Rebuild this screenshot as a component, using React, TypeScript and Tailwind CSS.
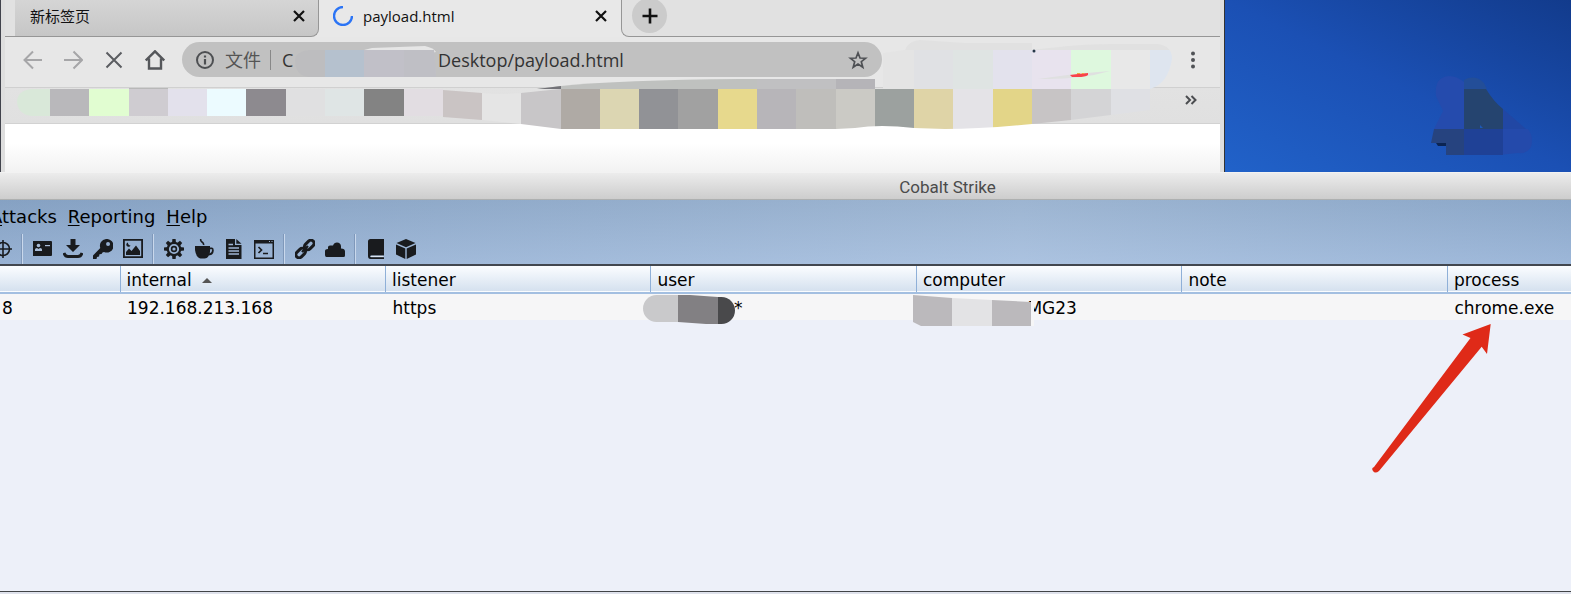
import type { ReactNode } from "react";

function Mosaic() {
  const cells: [number, number, string][] = [
    [50, 89, "#b9b8bb"], [89, 129, "#e1fdd1"], [129, 168, "#cfccd1"], [168, 207, "#e3e1ec"],
    [207, 246, "#ecfbff"], [246, 286, "#8d8a8f"], [286, 325, "#e0e0e1"], [325, 364, "#dfe5e5"],
    [364, 404, "#838383"], [404, 443, "#e2dde2"],
  ];
  const wide: [number, number, string][] = [
    [443, 482, "#cac4c4"], [482, 521, "#e5e5e5"], [521, 561, "#c8c6c8"], [561, 600, "#afaaa5"],
    [600, 639, "#dcd6b2"], [639, 678, "#919296"], [678, 718, "#a1a1a1"], [718, 757, "#e7d98d"],
    [757, 796, "#b7b5b9"], [796, 836, "#bfbebb"], [836, 875, "#cbcac5"], [875, 914, "#9ca19f"],
    [914, 953, "#dfd4a7"], [953, 993, "#e4e3e7"], [993, 1032, "#e3d588"], [1032, 1071, "#c7c4c5"],
    [1071, 1111, "#d4d4d6"], [1111, 1150, "#dfe0e4"],
  ];
  const upper: [number, number, string][] = [
    [883, 914, "#e4e4e4"], [914, 953, "#e0e1e4"], [953, 993, "#dfe4e3"], [993, 1032, "#e3e2ed"],
    [1032, 1071, "#e8e3ee"], [1071, 1111, "#def8de"], [1111, 1150, "#e8e8e8"], [1150, 1175, "#dee5ef"],
  ];
  return (
    <svg className="pointer-events-none absolute top-0 left-0" width="1220" height="135" aria-hidden="true">
      <defs>
        <clipPath id="lower">
          <path d="M443 90 L482 93 Q500 95 521 93 L560 89 H1150 V110 L1111 115 L1071 120 L1032 124 Q980 129 945 129 L914 128 Q880 124 855 128 L836 129 H561 L521 124 L482 120 L443 117Z" />
        </clipPath>
        <clipPath id="upper">
          <path d="M883 53 L905 50 Q908 41 920 40 L965 43 H1032 V50 Q1080 44 1110 44 H1158 Q1172 46 1172 59 Q1168 84 1150 89 H883Z" />
        </clipPath>
      </defs>
      <path d="M50 89 H31 Q17 91 17 102 Q18 114 31 116 H50Z" fill="#d9e8d9" />
      {cells.map(([a, b, c]) => <rect key={a} x={a} y={89} width={b - a} height={27} fill={c} />)}
      <rect x="129" y="88" width="39" height="1" fill="#b8b8b8" />
      <path d="M537 89 L561 86 Q620 80 740 79 H875 V89Z" fill="#bfc1bf" />
      <path d="M757 79 H836 V89 H757Z" fill="#c0c0c2" />
      <rect x="836" y="79" width="39" height="10" fill="#b5b4b8" />
      <path d="M537 89 L561 86 V89Z" fill="#727277" />
      <g clipPath="url(#lower)">
        {wide.map(([a, b, c]) => <rect key={a} x={a} y={89} width={b - a} height={41} fill={c} />)}
      </g>
      <g clipPath="url(#upper)">
        <rect x="883" y="40" width="292" height="10" fill="#e1e1e1" />
        {upper.map(([a, b, c]) => <rect key={a} x={a} y={50} width={b - a} height={39} fill={c} />)}
      </g>
      <path d="M1038 79 L1075 74 L1110 71 Q1080 80 1038 79Z" fill="#dfe0e0" />
      <path d="M1070 75 L1078 74 L1088 73 V75 Q1085 77 1078 77 L1072 77Z" fill="#f8434a" />
      <path d="M1077 73.500h3M1082 73.500h2" stroke="#efa640" />
      <circle cx="1034" cy="51" r="1.500" fill="#263748" />
      <path d="M325 50 H310 Q296 51 295 60 Q295 76 310 77 H325Z" fill="#bdbdbf" />
      <rect x="325" y="50" width="39" height="27" fill="#b5c1ce" />
      <path d="M364 50 L372 48 L425 46 Q434 48 436 52 L404 60Z" fill="#e6e6e6" />
      <path d="M364 50 H434 L436 77 H364Z" fill="#c1c0c8" />
      <path d="M404 50 H434 L436 77 H404Z" fill="#bfbfc5" />
    </svg>
  );
}

function CloseMark() {
  return (
    <svg width="12" height="12" viewBox="0 0 12 12" stroke="#111" strokeWidth="2.200">
      <path d="M1 1 11 11M11 1 1 11" />
    </svg>
  );
}

function Browser() {
  return (
    <section className="relative w-[78%] border-r border-[#333] bg-[#dedede] pr-1 pl-[5px]">
      <div className="absolute top-0 left-0 h-full w-px bg-[#41434c]" />
      <div className="flex h-[37px] bg-[#e1e1e1]">
        <div className="relative flex w-[314px] bg-[#e8e8e8]">
          <div className="w-2.5 border-b border-[#969696] bg-[#e1e1e1]" />
          <div className="flex flex-1 items-center justify-between rounded-br-lg border-r border-b border-[#969696] bg-linear-to-b from-[#d5d5d5] to-[#c6c6c6] pr-[13px] pb-1 pl-[15px] font-['Open_Sans','Noto_Sans_CJK_SC',sans-serif] text-[15px] leading-5 text-[#111]">
            <a href="#newtab">新标签页</a>
            <button aria-label="关闭新标签页"><CloseMark /></button>
          </div>
        </div>
        <div className="flex w-[302px] items-center bg-[#e8e8e8] pr-3.5 pb-[5px] pl-3.5 font-['Open_Sans',sans-serif] text-[15px] leading-5 text-[#111]">
          <svg width="20" height="20" viewBox="0 0 20 20" fill="none" stroke="#2b74f5" strokeWidth="2.400">
            <path d="M10 1 A9 9 0 1 0 19 10" />
          </svg>
          <a href="#payload" className="ml-2.5 flex-1">payload.html</a>
          <button aria-label="关闭 payload.html"><CloseMark /></button>
        </div>
        <div className="flex flex-1 bg-[#e8e8e8]">
          <div className="flex flex-1 rounded-bl-lg border-b border-l border-[#969696] bg-[#e1e1e1] pl-2.5">
            <button aria-label="新建标签页" className="-mt-0.5 flex size-[35px] items-center justify-center rounded-full bg-[#cbcbcb]">
              <svg width="16" height="16" viewBox="0 0 16 16" stroke="#111" strokeWidth="2.600"><path d="M8 0.500V15.500M0.500 8H15.500" /></svg>
            </button>
          </div>
        </div>
      </div>
      <div className="flex h-[51px] items-center border-b border-[#d0d0d0] bg-[#e7e7e7] pr-[22px] pb-[5px] pl-[17px] font-['Open_Sans','Noto_Sans_CJK_SC',sans-serif] text-lg leading-6 text-[#333]">
        <nav className="mr-[17px] flex gap-[21px]">
          <button aria-label="后退">
            <svg width="20" height="20" viewBox="0 0 20 20" fill="none" stroke="#a6a6a8" strokeWidth="2"><path d="M20 10H3M11 1.500 2.500 10 11 18.500" /></svg>
          </button>
          <button aria-label="前进">
            <svg width="20" height="20" viewBox="0 0 20 20" fill="none" stroke="#a6a6a8" strokeWidth="2"><path d="M1 10H18M10.500 1.500 19 10 10.500 18.500" /></svg>
          </button>
          <button aria-label="停止">
            <svg width="20" height="20" viewBox="0 0 20 20" fill="none" stroke="#5b5d61" strokeWidth="2"><path d="M2.500 2.500 17.500 17.500M17.500 2.500 2.500 17.500" /></svg>
          </button>
          <button aria-label="主页">
            <svg width="20" height="20" viewBox="0 0 20 20" fill="none" stroke="#55575b" strokeWidth="2.400"><path d="M0.800 10.500 10 1.300 19.200 10.500M4 8.500V18.500H16V8.500" /></svg>
          </button>
        </nav>
        <div className="flex h-[35px] flex-1 items-center rounded-full bg-[#c1c1c1] pr-3.5 pl-3.5">
          <svg width="18" height="18" viewBox="0 0 18 18" fill="none" stroke="#4d4f52" strokeWidth="2"><circle cx="9" cy="9" r="8" /><path d="M9 8V13.500M9 4.500V6.500" strokeWidth="2.200" /></svg>
          <span className="ml-[11px] text-[#555]">文件</span>
          <span className="ml-[9px] h-5 w-px bg-[#888]" />
          <span className="ml-[11px] w-[156px]">C</span>
          <input aria-label="地址" defaultValue="Desktop/payload.html" className="min-w-0 flex-1 bg-transparent outline-none" />
          <button aria-label="收藏">
            <svg width="20" height="20" viewBox="0 0 20 20" fill="none" stroke="#4e5054" strokeWidth="1.700"><path d="M10 2.800 12 8 17.600 8.200 13.300 11.700 14.800 17.200 10 14 5.200 17.200 6.700 11.700 2.400 8.200 8 8Z" /></svg>
          </button>
        </div>
        <button aria-label="菜单" className="ml-[306px]">
          <svg width="10" height="18" viewBox="0 0 10 18" fill="#505256"><circle cx="5" cy="2.500" r="2" /><circle cx="5" cy="9" r="2" /><circle cx="5" cy="15.500" r="2" /></svg>
        </button>
      </div>
      <div className="flex h-9 items-center justify-end border-b border-[#d2d2d2] bg-linear-to-b from-[#e2e2e2] to-[#e0e0e0] pr-[23px] pb-3">
        <button aria-label="更多书签">
          <svg width="12" height="10" viewBox="0 0 12 10" fill="none" stroke="#4b4d50" strokeWidth="2"><path d="M1 1 5 5 1 9M6.500 1 10.500 5 6.500 9" /></svg>
        </button>
      </div>
      <main className="h-12 bg-linear-to-b from-white from-40% to-[#f2f2f2]" />
      <Mosaic />
    </section>
  );
}

function Desktop() {
  return (
    <aside className="relative flex-1 overflow-hidden bg-linear-to-tr from-[#2162c9] via-[#1b50b4] to-[#123b8c]">
      <svg className="absolute right-9 bottom-[17px]" width="104" height="80" viewBox="1431 75 104 80" aria-hidden="true">
        <path d="M1464 155 V129 H1434 L1443 111 L1436 96 Q1434 77 1449 76 Q1457 76 1464 82Z" fill="#254bad" />
        <path d="M1464 80 Q1475 74 1484 83 L1487 89 H1464Z" fill="#234e98" />
        <path d="M1464 89 H1486 Q1494 102 1503 109 V129 H1464Z" fill="#25446f" />
        <path d="M1503 109 L1526 129 H1503Z" fill="#2147a4" />
        <path d="M1434 129 H1464 V155 H1446 V143 H1431Z" fill="#26437f" />
        <path d="M1436 143 H1446 V146 H1438Z" fill="#0b2452" />
        <path d="M1464 129 H1503 V155 H1464Z" fill="#1f4196" />
        <path d="M1503 129 H1528 Q1534 137 1531 147 Q1527 154 1518 153 L1503 154.500Z" fill="#244aab" />
        <path d="M1480 125 L1483 128 H1480Z" fill="#1c58b8" />
      </svg>
    </aside>
  );
}

function Tool({ label, children }: { label: string; children: ReactNode }) {
  return (
    <button aria-label={label} className="size-5 shrink-0">
      <svg width="20" height="20" viewBox="0 0 20 20" fill="#191b1e">{children}</svg>
    </button>
  );
}

function Divider() {
  return <span className="h-[30px] w-px shrink-0 bg-[#c9d8ec] shadow-[-1px_0_0_#7f98ba]" />;
}

const menus = [
  { key: "A", rest: "ttacks" },
  { key: "R", rest: "eporting" },
  { key: "H", rest: "elp" },
];

function Toolbar() {
  const teeth = [0, 45, 90, 135, 180, 225, 270, 315];
  return (
    <div className="-ml-2 flex h-[31px] items-center gap-2.5">
      <Tool label="Targets">
        <g fill="none" stroke="#191b1e" strokeWidth="1.600"><circle cx="11" cy="10" r="6.500" /><path d="M1 10H20M11 1V19" /></g>
      </Tool>
      <Divider />
      <Tool label="Credentials">
        <path d="M0 2H18Q19 2 19 3V16Q19 17 18 17H0Q-1 17 -1 16V3Q-1 2 0 2Z" />
        <g fill="#a9bdd8"><circle cx="5.500" cy="6.500" r="1.800" /><path d="M2 12V10.500Q2 9 4 9L5.500 10 7 9Q9 9 9 10.500V12Z" /><path d="M12 6H17V7.200H12Z" /></g>
      </Tool>
      <Tool label="Downloads">
        <path d="M7.500 0H12.500V6H17L10 13 3 6H7.500Z" />
        <path d="M1 14Q2 17.500 5 17.500H15Q18 17.500 19 14" fill="none" stroke="#191b1e" strokeWidth="2.800" />
      </Tool>
      <Tool label="Key log">
        <path fillRule="evenodd" d="M13 0A6.800 6.800 0 1 1 11 13L9.500 13.500 8.500 15 6.500 15.300 6 17.500 4 18 3.500 20H0V16.500L7.300 9A6.800 6.800 0 0 1 13 0ZM15 3A2 2 0 1 0 15.100 7A2 2 0 1 0 15 3Z" />
      </Tool>
      <Tool label="Screenshots">
        <path fillRule="evenodd" d="M0 0H20V19H0ZM1.800 1.800V17.200H18.200V1.800Z" />
        <path d="M3 16V13L6 9.500 8.500 12 13 6.500 17 12V16Z" />
        <path d="M5 3.500A2.200 2.200 0 1 0 7.500 6.500 2.500 2.500 0 0 1 5 3.500Z" />
      </Tool>
      <Divider />
      <Tool label="Stageless payload">
        {teeth.map((a) => <path key={a} d="M8.400 0H11.600L12 4H8Z" transform={`rotate(${a} 10 10)`} />)}
        <circle cx="10" cy="10" r="6.200" fill="none" stroke="#191b1e" strokeWidth="2.200" />
        <circle cx="10" cy="10" r="2.400" fill="none" stroke="#191b1e" strokeWidth="1.600" />
      </Tool>
      <Tool label="Java applet">
        <path fillRule="evenodd" d="M1 7H16V8.500H18Q20 8.500 19.700 12Q19.300 16.300 14.800 16.500 13.500 19.500 10.500 19.500H6.500Q2 18.500 1 11ZM16 10.300Q16.200 12.500 15.700 14.500 18.200 13.500 18.200 10.300Z" />
        <path d="M7 0Q6 1.500 8 3 10 4.300 9.500 6" fill="none" stroke="#191b1e" strokeWidth="1.600" />
      </Tool>
      <Tool label="Office macro">
        <path d="M2 0H11V6H17.500V20H2Z" /><path d="M12.300 0 17.500 4.800H12.300Z" />
        <path d="M4.500 9H15M4.500 12H15M4.500 15H15M4.500 5.500H9" stroke="#9fb5d3" strokeWidth="1.300" />
      </Tool>
      <Tool label="Scripted web delivery">
        <path fillRule="evenodd" d="M0 1H20.500V20H0ZM1.500 4.500V18.500H18.500V4.500Z" />
        <path d="M4.500 8 7.500 11 4.500 14M9 14.500H14" fill="none" stroke="#191b1e" strokeWidth="1.700" />
        <path d="M15 2.500H16M17.500 2.500H18.500" stroke="#9fb5d3" />
      </Tool>
      <Divider />
      <Tool label="Host file">
        <g fill="none" stroke="#191b1e" strokeWidth="3"><rect x="8.700" y="3" width="11" height="6.400" rx="3.200" transform="rotate(-45 14 6)" /><rect x="0.300" y="10.600" width="11" height="6.400" rx="3.200" transform="rotate(-45 6 14)" /></g>
        <path d="M7 13 13 7" stroke="#191b1e" strokeWidth="2.400" />
      </Tool>
      <Tool label="Web sites">
        <path d="M1.500 18Q0 18 0 16V12Q0 10 3 10V8Q3.200 6.500 5 6.500H8Q9 3.500 12 3.500 15.500 3.500 16 7V9.500Q20 9.500 20 12.500V16.500Q20 18 18.500 18Z" />
      </Tool>
      <Divider />
      <Tool label="Help contents">
        <path d="M4.500 0H18V16.500H5.500Q4 16.500 4 17.300 4 18.300 5.500 18.300H18V20H4.500Q2 20 2 17V2.500Q2 0 4.500 0Z" />
        <path d="M5 17.400H17.500" stroke="#dce5f1" strokeWidth="1.200" />
      </Tool>
      <Tool label="About">
        <path d="M10 0 19.500 4 10 8.300 0.500 4ZM0 5.500 9.300 9.600V20L0 15.500ZM20 5.500 10.700 9.600V20L20 15.500Z" />
      </Tool>
    </div>
  );
}

const columns = ["", "internal", "listener", "user", "computer", "note", "process"];

function SessionTable() {
  return (
    <table className="w-full table-fixed border-collapse text-left">
      <colgroup>
        <col className="w-[120px]" />
        <col className="w-[16.900%]" /><col className="w-[16.900%]" /><col className="w-[16.900%]" />
        <col className="w-[16.900%]" /><col className="w-[16.900%]" /><col />
      </colgroup>
      <thead>
        <tr className="h-[27px] border-b-2 border-[#a3bfe1] bg-linear-to-b from-[#fbfdff] to-[#d5e1ef]">
          {columns.map((c, i) => (
            <th key={i} className="border-l border-[#8fb0d8] pt-0.5 pl-1.5 font-normal first:border-l-0">
              {c === "internal" ? (
                <button className="flex items-center gap-2.5">
                  {c}
                  <svg width="10" height="5" viewBox="0 0 10 5" fill="#555"><path d="M0 5 5 0 10 5Z" /></svg>
                </button>
              ) : c}
            </th>
          ))}
        </tr>
      </thead>
      <tbody>
        <tr className="h-[27px] bg-[#f6f6f7]">
          <td className="pt-0.5 pl-0.5">8</td>
          <td className="pt-0.5 pl-[7px]">192.168.213.168</td>
          <td className="pt-0.5 pl-[7px]">https</td>
          <td className="relative pt-0.5 pl-[83px]">
            <svg className="absolute top-0 -left-2" width="93" height="31" viewBox="643 293 93 31" aria-hidden="true">
              <path d="M678 294V321H656.500A13.500 13.500 0 0 1 656.500 294Z" fill="#c9c9cb" />
              <path d="M678 294H690L718 296V323H706L678 321Z" fill="#828083" />
              <path d="M718 296H721.500A13.500 13.500 0 0 1 721.500 323H718Z" fill="#49494b" />
            </svg>
            *
          </td>
          <td className="relative pt-0.5 pl-[111px]">
            MG23
            <svg className="absolute top-0 -left-3" width="132" height="33" viewBox="905 293 132 33" aria-hidden="true">
              <path d="M1032 299H1035V325H1032Z" fill="#f6f6f7" />
              <path d="M914 294 953 297V325H922L914 321Z" fill="#bbb9bc" />
              <path d="M953 297 993 299V325H953Z" fill="#e3e3e5" />
              <path d="M993 299 1032 301V325H993Z" fill="#bbb9bc" />
            </svg>
          </td>
          <td />
          <td className="pt-0.5 pl-[7px]">chrome.exe</td>
        </tr>
      </tbody>
    </table>
  );
}

function CobaltStrike() {
  return (
    <section className="relative flex flex-1 flex-col overflow-hidden font-['DejaVu_Sans',sans-serif] text-[17px] leading-6 text-black">
      <header className="flex h-7 items-center justify-center border-t border-b border-t-[#f2f2f2] border-b-[#aeb0b0] bg-linear-to-b from-[#ececec] to-[#cdcdcd] pt-0.5 pl-[324px] font-[Roboto,sans-serif] text-[17px] text-[#4b4b4b]">
        Cobalt Strike
      </header>
      <div className="h-[66px] border-b-2 border-[#42474f] bg-linear-to-r from-[#88a3c5] via-[#a9bfda] via-65% to-[#90abcd]">
        <div className="h-full bg-linear-to-b from-[#809dbd]/30 to-[#b0c9ea]/40">
          <nav className="-ml-2.5 flex h-[33px] items-center gap-[11px] text-lg leading-6">
            {menus.map((m) => (
              <button key={m.key}><u className="underline-offset-2">{m.key}</u>{m.rest}</button>
            ))}
          </nav>
          <Toolbar />
        </div>
      </div>
      <div className="flex-1 bg-[#edf0f9]"><SessionTable /></div>
      <footer className="h-[3px] border-t border-[#414447] bg-[#dfe2ec]" />
      <svg className="absolute top-[150px] right-[76px]" width="125" height="155" viewBox="1370 322 125 155" aria-hidden="true">
        <path d="M1490.700 324 1487 354 1481.700 346.700 1379 471Q1375 474 1373 471T1374 467L1470.500 338 1462.500 334.500Z" fill="#df2a18" />
      </svg>
    </section>
  );
}

export default function App() {
  return (
    <div className="flex min-h-screen flex-col overflow-hidden">
      <div className="flex">
        <Browser />
        <Desktop />
      </div>
      <CobaltStrike />
    </div>
  );
}
